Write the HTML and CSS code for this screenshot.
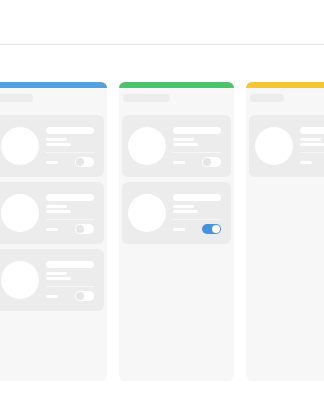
FILE: index.html
```html
<!DOCTYPE html>
<html lang="en">
<head>
  <meta charset="UTF-8">
  <meta name="viewport" content="width=device-width, initial-scale=1.0">
  <title>Board</title>
  <link rel="stylesheet" href="styles.css">
</head>
<body>
  <div class="topbar"></div>

  <div class="board">
    <div class="column">
      <div class="column-bar bar-blue"></div>
      <div class="column-title title-md"></div>
      <div class="card">
        <div class="avatar"></div>
        <div class="info">
          <div class="line line-title"></div>
          <div class="line line-a"></div>
          <div class="line line-b"></div>
          <div class="divider"></div>
          <div class="card-foot">
            <div class="line line-tag"></div>
            <div class="toggle"><span class="knob"></span></div>
          </div>
        </div>
      </div>
      <div class="card">
        <div class="avatar"></div>
        <div class="info">
          <div class="line line-title"></div>
          <div class="line line-a"></div>
          <div class="line line-b"></div>
          <div class="divider"></div>
          <div class="card-foot">
            <div class="line line-tag"></div>
            <div class="toggle"><span class="knob"></span></div>
          </div>
        </div>
      </div>
      <div class="card">
        <div class="avatar"></div>
        <div class="info">
          <div class="line line-title"></div>
          <div class="line line-a"></div>
          <div class="line line-b"></div>
          <div class="divider"></div>
          <div class="card-foot">
            <div class="line line-tag"></div>
            <div class="toggle"><span class="knob"></span></div>
          </div>
        </div>
      </div>
    </div>

    <div class="column">
      <div class="column-bar bar-green"></div>
      <div class="column-title title-lg"></div>
      <div class="card">
        <div class="avatar"></div>
        <div class="info">
          <div class="line line-title"></div>
          <div class="line line-a"></div>
          <div class="line line-b"></div>
          <div class="divider"></div>
          <div class="card-foot">
            <div class="line line-tag"></div>
            <div class="toggle"><span class="knob"></span></div>
          </div>
        </div>
      </div>
      <div class="card">
        <div class="avatar"></div>
        <div class="info">
          <div class="line line-title"></div>
          <div class="line line-a"></div>
          <div class="line line-b"></div>
          <div class="divider"></div>
          <div class="card-foot">
            <div class="line line-tag"></div>
            <div class="toggle toggle-on"><span class="knob"></span></div>
          </div>
        </div>
      </div>
    </div>

    <div class="column">
      <div class="column-bar bar-yellow"></div>
      <div class="column-title title-sm"></div>
      <div class="card">
        <div class="avatar"></div>
        <div class="info">
          <div class="line line-title"></div>
          <div class="line line-a"></div>
          <div class="line line-b"></div>
          <div class="divider"></div>
          <div class="card-foot">
            <div class="line line-tag"></div>
            <div class="toggle"><span class="knob"></span></div>
          </div>
        </div>
      </div>
    </div>
  </div>
</body>
</html>
```

FILE: styles.css
```css
body {
  margin: 0;
  background-color: #fff;
  font-family: "Liberation Sans", Arial, sans-serif;
  overflow: hidden;
}

.topbar {
  height: 44px;
  border-bottom: 1px solid #e6e6e6;
}

/* board is wider than the window, first column starts slightly off-screen */
.board {
  display: flex;
  gap: 12px;
  padding-top: 37px;
  overflow: hidden;
}

.column {
  flex: 0 0 115px;
  height: 299px;
  background-color: #f7f7f7;
  border-radius: 6px;
  padding: 0 3px;
  box-sizing: border-box;
}

.column:first-child {
  margin-left: -8px;
}

.column-bar {
  height: 6px;
  margin: 0 -3px;
  border-radius: 6px 6px 0 0;
}

.bar-blue { background-color: #55a0de; }
.bar-green { background-color: #4fc26c; }
.bar-yellow { background-color: #f7c531; }

.column-title {
  height: 8px;
  margin: 6px 0 13px 1px;
  border-radius: 4px;
  background-color: #ececec;
}

.title-md { width: 37px; }
.title-lg { width: 47px; }
.title-sm { width: 34px; }

.card {
  display: flex;
  align-items: flex-start;
  gap: 7px;
  height: 62px;
  padding: 12px 10px 0 6px;
  margin-bottom: 5px;
  box-sizing: border-box;
  background-color: #ececec;
  border-radius: 6px;
}

.avatar {
  flex: 0 0 38px;
  height: 38px;
  border-radius: 50%;
  background-color: #fff;
}

.info {
  width: 48px;
  display: flex;
  flex-direction: column;
}

.line {
  background-color: #fff;
  border-radius: 4px;
}

.line-title {
  height: 7px;
  margin-bottom: 4px;
}

.line-a {
  width: 21px;
  height: 3px;
  margin-bottom: 2px;
}

.line-b {
  width: 25px;
  height: 3px;
}

.divider {
  height: 1px;
  margin-top: 6px;
  background-color: #f6f6f6;
}

.card-foot {
  display: flex;
  justify-content: space-between;
  align-items: center;
  height: 10px;
  margin-top: 4px;
}

.line-tag {
  width: 12px;
  height: 3px;
}

.toggle {
  width: 19px;
  height: 10px;
  border-radius: 5px;
  background-color: #fff;
  display: flex;
  align-items: center;
  padding: 0 1px;
  box-sizing: border-box;
}

.knob {
  width: 8px;
  height: 8px;
  border-radius: 50%;
  background-color: #e6e6e6;
}

.toggle-on {
  background-color: #4a91db;
  justify-content: flex-end;
}

.toggle-on .knob {
  background-color: #fff;
}
```
